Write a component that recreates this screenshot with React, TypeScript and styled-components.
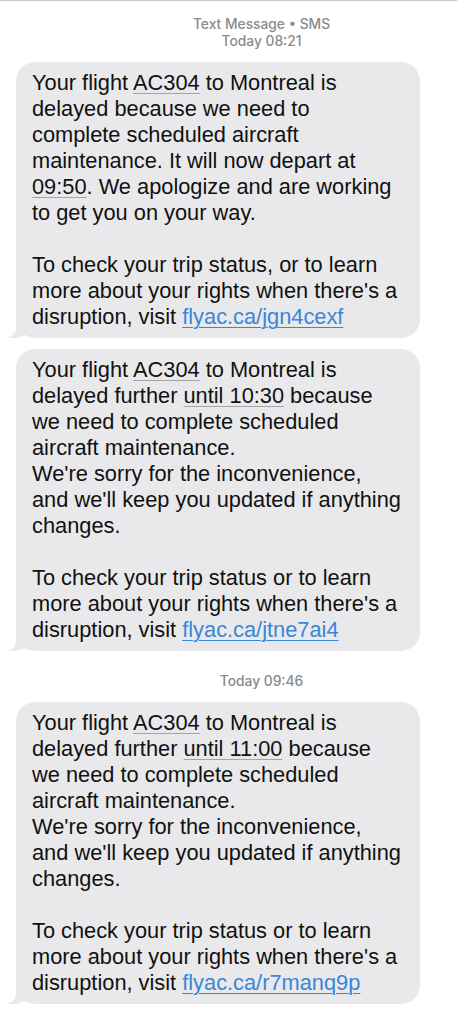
import React from "react";
import styled, { createGlobalStyle } from "styled-components";

const Global = createGlobalStyle`
  html, body { margin: 0; padding: 0; background: #ffffff; }
  body { font-family: "Liberation Sans", "Inter", sans-serif; -webkit-font-smoothing: antialiased; }
`;

const Screen = styled.div`
  width: 457px;
  min-height: 1024px;
  background: #ffffff;
  border-top: 1px solid #c8c8c8;
  box-sizing: border-box;
  display: flex;
  flex-direction: column;
`;

const Meta = styled.div<{ $top: number; $bottom: number }>`
  padding-left: 66px;
  margin-top: ${(p) => p.$top}px;
  margin-bottom: ${(p) => p.$bottom}px;
  text-align: center;
  font-family: "Inter", "Liberation Sans", sans-serif;
  font-size: 13.8px;
  line-height: 17px;
  color: #8a8a8e;
  font-weight: 500;
`;

const Thread = styled.div`
  display: flex;
  flex-direction: column;
  gap: 11px;
  padding: 0 37px 0 16px;
`;

const Bubble = styled.div<{ $tail?: boolean }>`
  position: relative;
  background: #e9e9eb;
  border-radius: 19px;
  padding: 8px 16px;
  font-family: "Liberation Sans", "Inter", sans-serif;
  font-size: 21.8px;
  line-height: 26px;
  color: #111111;

  ${(p) =>
    p.$tail
      ? `
  &::before {
    content: "";
    position: absolute;
    bottom: 0;
    left: -8px;
    width: 22px;
    height: 20px;
    background: #e9e9eb;
    border-bottom-right-radius: 16px 14px;
  }
  &::after {
    content: "";
    position: absolute;
    bottom: 0;
    left: -12px;
    width: 12px;
    height: 20px;
    background: #ffffff;
    border-bottom-right-radius: 10px;
  }`
      : ""}
`;

const Detected = styled.span`
  text-decoration: underline;
  text-decoration-color: rgba(60, 60, 67, 0.4);
  text-decoration-thickness: 1px;
  text-underline-offset: 3px;
`;

const Link = styled.a`
  color: #3a86d8;
  text-decoration: underline;
  text-decoration-thickness: 1px;
  text-underline-offset: 3px;
`;

type Msg = { until?: string; link: string };

const FirstMessage: React.FC = () => (
  <Bubble $tail>
    Your flight <Detected>AC304</Detected> to Montreal is
    <br />
    delayed because we need to
    <br />
    complete scheduled aircraft
    <br />
    maintenance. It will now depart at
    <br />
    <Detected>09:50</Detected>. We apologize and are working
    <br />
    to get you on your way.
    <br />
    <br />
    To check your trip status, or to learn
    <br />
    more about your rights when there's a
    <br />
    disruption, visit <Link href="#">flyac.ca/jgn4cexf</Link>
  </Bubble>
);

const FurtherMessage: React.FC<Msg & { tail?: boolean }> = ({ until, link, tail }) => (
  <Bubble $tail={tail}>
    Your flight <Detected>AC304</Detected> to Montreal is
    <br />
    delayed further <Detected>until {until}</Detected> because
    <br />
    we need to complete scheduled
    <br />
    aircraft maintenance.
    <br />
    We're sorry for the inconvenience,
    <br />
    and we'll keep you updated if anything
    <br />
    changes.
    <br />
    <br />
    To check your trip status or to learn
    <br />
    more about your rights when there's a
    <br />
    disruption, visit <Link href="#">{link}</Link>
  </Bubble>
);

export default function App() {
  return (
    <>
      <Global />
      <Screen>
        <Meta $top={15} $bottom={12}>
          Text Message • SMS
          <br />
          Today 08:21
        </Meta>
        <Thread>
          <FirstMessage />
          <FurtherMessage until="10:30" link="flyac.ca/jtne7ai4" tail />
        </Thread>
        <Meta $top={22} $bottom={12}>
          Today 09:46
        </Meta>
        <Thread>
          <FurtherMessage until="11:00" link="flyac.ca/r7manq9p" tail />
        </Thread>
      </Screen>
    </>
  );
}
